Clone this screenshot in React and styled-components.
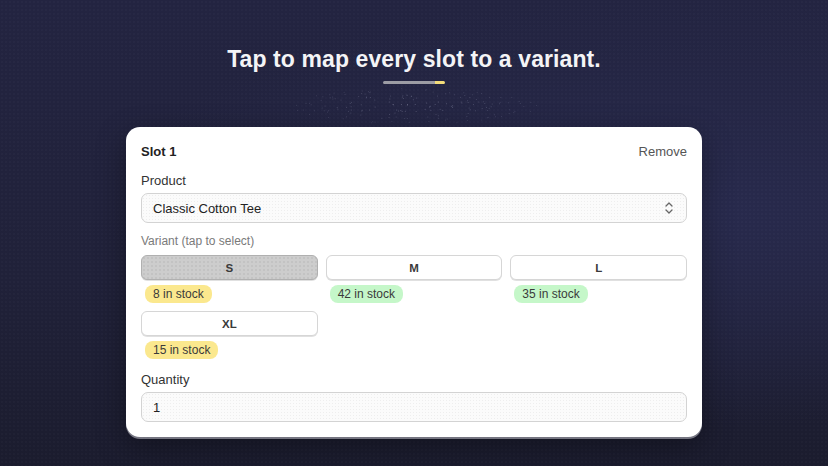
import styled, { createGlobalStyle } from "styled-components";

const GlobalStyle = createGlobalStyle`
  html, body {
    margin: 0;
    padding: 0;
    background: #1e1f35;
  }
  * {
    box-sizing: border-box;
  }
`;

const Page = styled.div`
  width: 828px;
  height: 466px;
  overflow: hidden;
  display: flex;
  flex-direction: column;
  align-items: center;
  padding-top: 44px;
  font-family: "Liberation Sans", Inter, sans-serif;
  background:
    radial-gradient(rgba(255, 255, 255, 0.03) 0.6px, transparent 0.9px) 0 0 / 4px 4px,
    radial-gradient(ellipse at 85% 45%, #282a4d 0%, rgba(40, 42, 77, 0) 60%),
    linear-gradient(180deg, #232441 0%, #202139 60%, #1b1c2e 100%);
`;

const Title = styled.h1`
  margin: 0;
  font-size: 23px;
  line-height: 30px;
  font-weight: 700;
  letter-spacing: 0.1px;
  color: #f4f4f6;
`;

const Progress = styled.div`
  margin-top: 7px;
  width: 62px;
  height: 3px;
  display: flex;
  border-radius: 2px;
  overflow: hidden;
`;

const ProgressPart = styled.div`
  height: 100%;
  flex: ${(p) => p.$grow};
  background: ${(p) => p.$color};
`;

const Sparkle = styled.svg`
  display: block;
  margin-top: 2px;
`;

const Card = styled.div`
  width: 576px;
  background: #ffffff;
  border-radius: 14px;
  box-shadow: 0 2px 0 rgba(180, 180, 190, 0.6), 0 10px 30px rgba(0, 0, 0, 0.35);
  padding: 16px 15px 15px;
  color: #222;
`;

const Header = styled.div`
  display: flex;
  justify-content: space-between;
  align-items: center;
  height: 16px;
`;

const SlotName = styled.div`
  font-size: 13px;
  font-weight: 700;
  color: #222;
`;

const RemoveButton = styled.button`
  border: none;
  background: none;
  padding: 0;
  font-family: inherit;
  font-size: 13px;
  color: #555;
  cursor: pointer;
`;

const Label = styled.div`
  margin-top: ${(p) => p.$top}px;
  font-size: ${(p) => (p.$muted ? "12px" : "13px")};
  line-height: 16px;
  color: ${(p) => (p.$muted ? "#7a7a7a" : "#333")};
`;

const Field = styled.div`
  margin-top: 4px;
  height: 30px;
  border: 1px solid #d3d3d3;
  border-radius: 7px;
  background:
    radial-gradient(rgba(0, 0, 0, 0.05) 0.5px, transparent 0.8px) 0 0 / 3px 3px,
    #fbfbfb;
  display: flex;
  align-items: center;
  justify-content: space-between;
  padding: 0 11px;
  font-size: 13px;
  color: #222;
`;

const Grid = styled.div`
  margin-top: 6px;
  display: grid;
  grid-template-columns: repeat(3, 1fr);
  column-gap: 8px;
  row-gap: 8px;
`;

const Cell = styled.div`
  display: flex;
  flex-direction: column;
  align-items: flex-start;
`;

const VariantButton = styled.button`
  width: 100%;
  height: 25px;
  border-radius: 6px;
  font-family: inherit;
  font-size: 11.5px;
  font-weight: 700;
  color: #3a3a3a;
  cursor: pointer;
  border: 1px solid ${(p) => (p.$selected ? "#b0b0b0" : "#d6d6d6")};
  box-shadow: 0 1px 0 rgba(0, 0, 0, 0.12);
  background: ${(p) =>
    p.$selected
      ? "radial-gradient(rgba(0,0,0,0.08) 0.6px, transparent 0.9px) 0 0 / 4px 4px, #cdcdcd"
      : "#ffffff"};
`;

const Badge = styled.span`
  margin: 5px 0 0 4px;
  height: 18px;
  line-height: 18px;
  padding: 0 8px;
  border-radius: 8px;
  font-size: 12px;
  color: #3a3a3a;
  background: ${(p) => (p.$tone === "low" ? "#fbe88e" : "#c5f7c9")};
`;

const variants = [
  { size: "S", stock: 8, selected: true },
  { size: "M", stock: 42 },
  { size: "L", stock: 35 },
  { size: "XL", stock: 15 },
];

function ChevronsUpDown() {
  return (
    <svg width="12" height="14" viewBox="0 0 12 14" fill="none">
      <path d="M3 5 L6 2 L9 5" stroke="#666" strokeWidth="1.3" strokeLinecap="round" strokeLinejoin="round" />
      <path d="M3 9 L6 12 L9 9" stroke="#666" strokeWidth="1.3" strokeLinecap="round" strokeLinejoin="round" />
    </svg>
  );
}

function SparkleDots() {
  const dots = [];
  let seed = 11;
  const rand = () => {
    seed = (seed * 9301 + 49297) % 233280;
    return seed / 233280;
  };
  for (let i = 0; i < 170; i++) {
    const a = rand() * Math.PI * 2;
    const r = Math.sqrt(rand());
    const x = 130 + Math.cos(a) * r * 125;
    const y = 20 + Math.sin(a) * r * 18;
    dots.push(
      <circle key={i} cx={x.toFixed(1)} cy={y.toFixed(1)} r="0.5" fill="#9092ad" opacity={0.25 + (1 - r) * 0.35} />
    );
  }
  return (
    <Sparkle width="260" height="41" viewBox="0 0 260 41">
      {dots}
    </Sparkle>
  );
}

export default function App() {
  return (
    <>
      <GlobalStyle />
      <Page>
        <Title>Tap to map every slot to a variant.</Title>
        <Progress>
          <ProgressPart $grow={52} $color="#9c9ca4" />
          <ProgressPart $grow={10} $color="#f3dc7a" />
        </Progress>
        <SparkleDots />
        <Card>
          <Header>
            <SlotName>Slot 1</SlotName>
            <RemoveButton>Remove</RemoveButton>
          </Header>
          <Label $top={14}>Product</Label>
          <Field>
            <span>Classic Cotton Tee</span>
            <ChevronsUpDown />
          </Field>
          <Label $top={10} $muted>
            Variant (tap to select)
          </Label>
          <Grid>
            {variants.map((v) => (
              <Cell key={v.size}>
                <VariantButton $selected={v.selected}>{v.size}</VariantButton>
                <Badge $tone={v.stock < 20 ? "low" : "ok"}>{v.stock} in stock</Badge>
              </Cell>
            ))}
          </Grid>
          <Label $top={13}>Quantity</Label>
          <Field>
            <span>1</span>
          </Field>
        </Card>
      </Page>
    </>
  );
}
